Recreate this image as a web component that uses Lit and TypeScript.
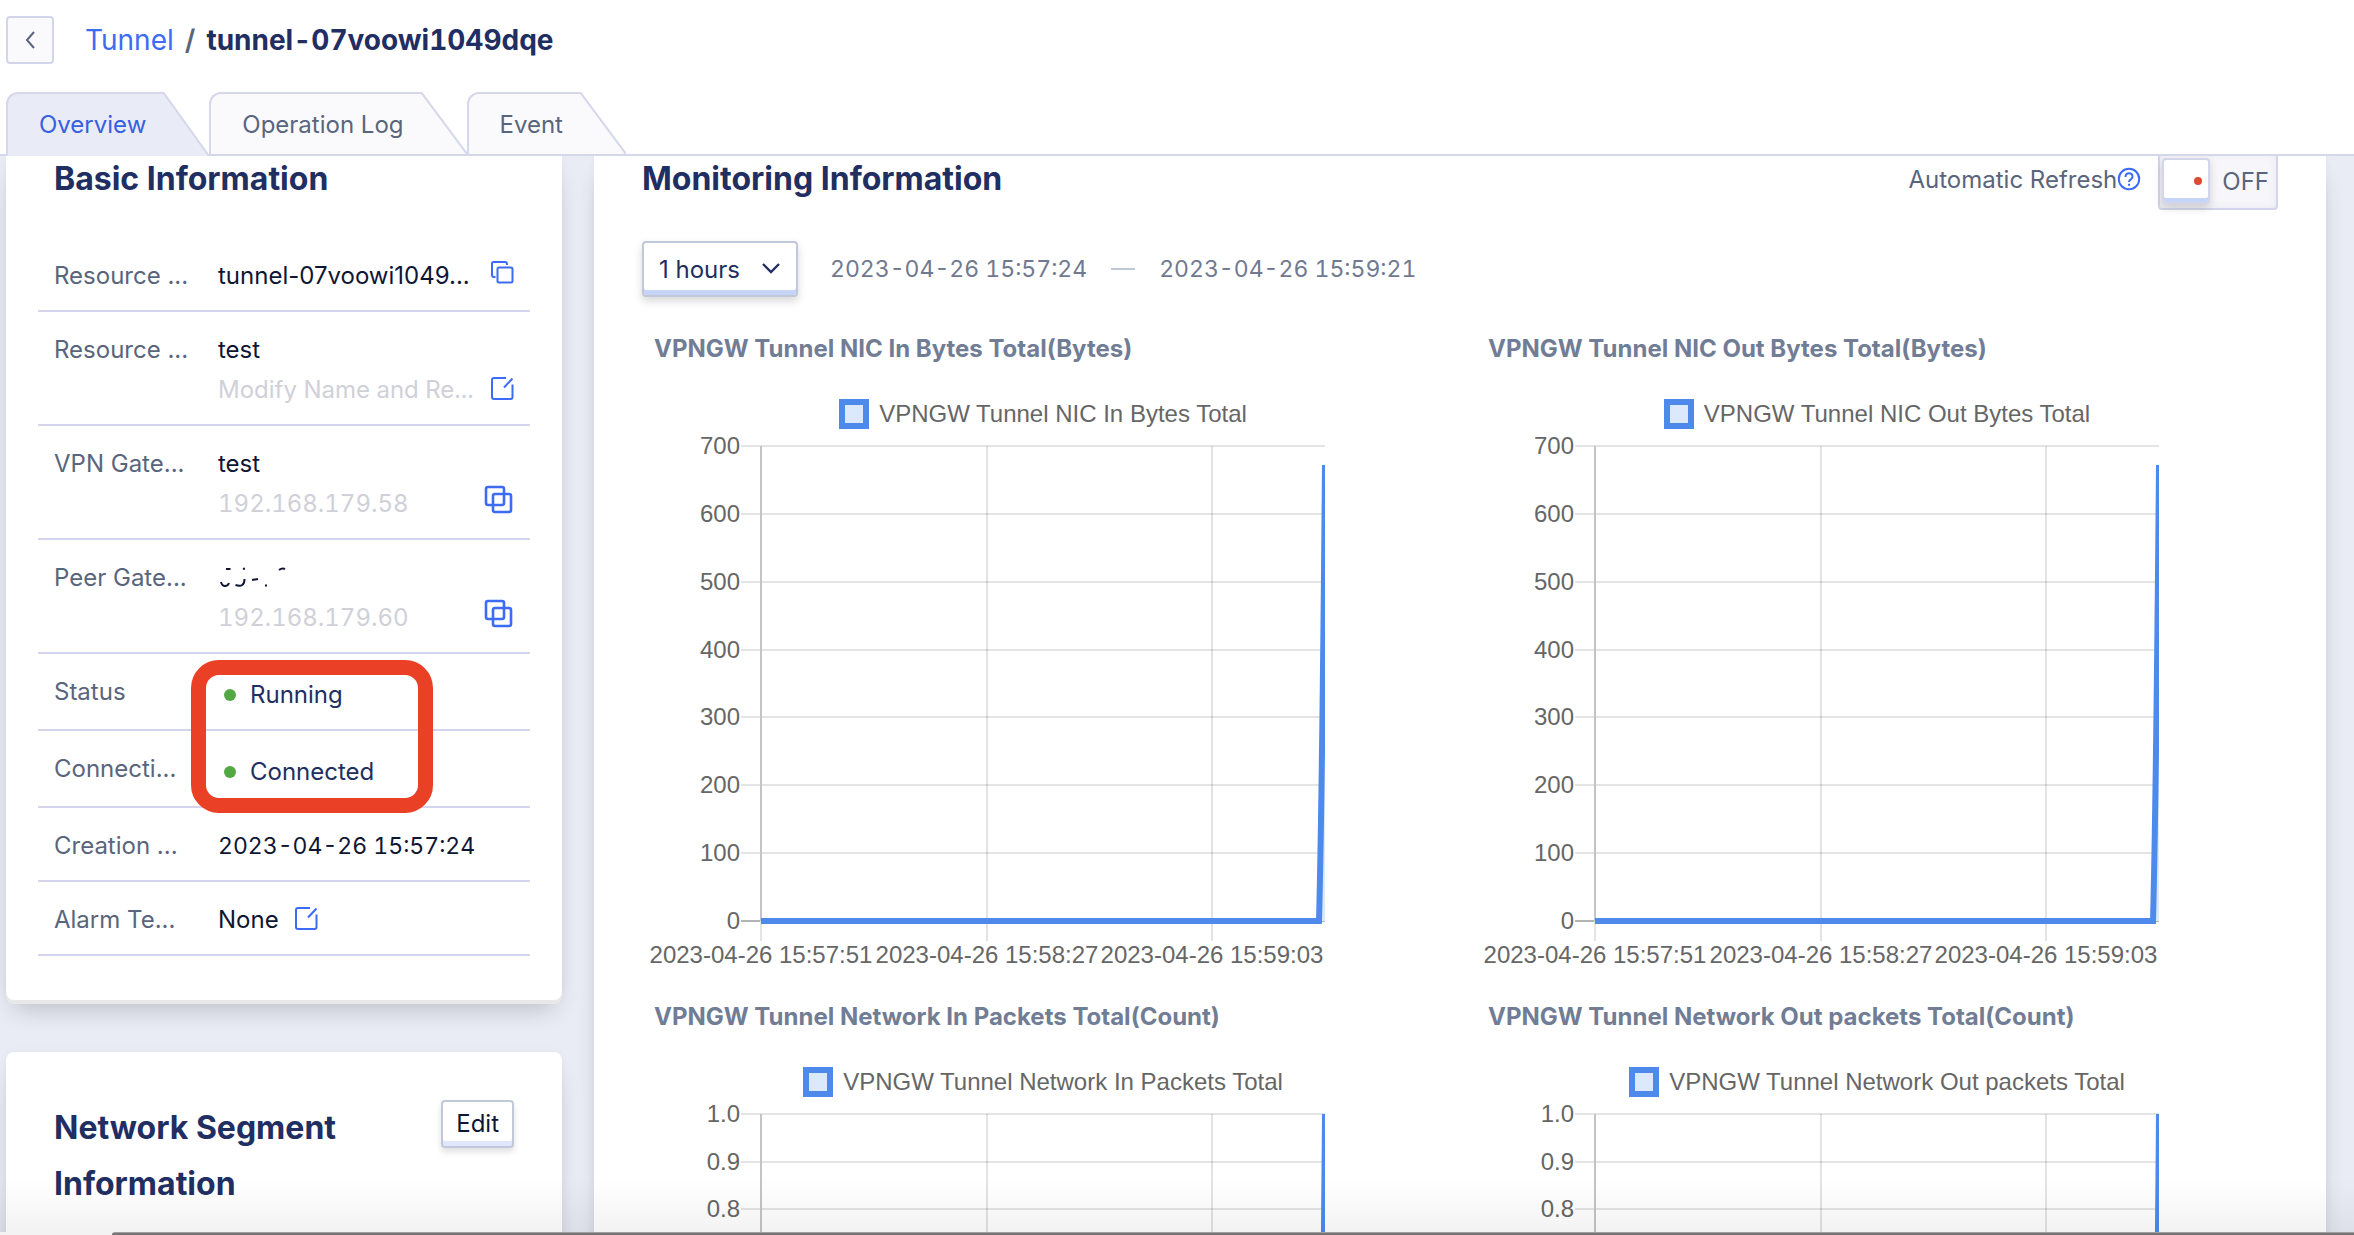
import { LitElement, html, css, svg, nothing } from "lit";
import { customElement, property } from "lit/decorators.js";

const FONT = css`Inter, "Noto Sans", sans-serif`;

const copyIcon = html`<svg class="icon" width="24" height="32" viewBox="0 0 24 32" fill="none" stroke="#3d6bf5" stroke-width="2" aria-hidden="true">
  <path d="M5.500 17H4a2 2 0 0 1-2-2V3.500A1.500 1.500 0 0 1 3.500 2H15a2 2 0 0 1 2 2v1" />
  <rect x="7.500" y="7.500" width="15" height="15" rx="1.500" />
</svg>`;

const editIcon = html`<svg class="icon" width="24" height="28" viewBox="0 0 24 28" fill="none" stroke="#3d6bf5" stroke-width="2" aria-hidden="true">
  <path d="M16 2H4a2 2 0 0 0-2 2v17a2 2 0 0 0 2 2h16.500a2 2 0 0 0 2-2V8.500" />
  <path d="M14 11.500l8.500-9" />
</svg>`;

const duplicateIcon = html`<svg class="icon" width="30" height="38" viewBox="0 0 30 38" fill="none" stroke="#3d6bf5" stroke-width="2.600" aria-hidden="true">
  <rect x="2" y="2" width="18" height="18" rx="2" />
  <rect x="9" y="9" width="18" height="18" rx="2" />
</svg>`;

@customElement("trend-chart")
class TrendChart extends LitElement {
  @property() name = "";
  @property() unit = "";
  @property({ attribute: false }) ticks: string[] = [];
  @property({ attribute: false }) times: string[] = [];
  @property({ attribute: false }) divisions = 7;
  @property({ attribute: false }) peak = 1;

  static styles = css`
    :host { display: block; min-width: 0; font-family: ${FONT}; }
    .title { margin: 0; padding-left: 12px; font-size: 24px; line-height: 32px; font-weight: 700; color: #717d95; white-space: nowrap; }
    .legend { display: flex; justify-content: center; align-items: center; gap: 10px; height: 30px; margin: 34px 0 0; }
    .swatch { box-sizing: border-box; width: 30px; height: 30px; border: 6px solid #4d8aec; background: #dce8fb; }
    .legend, .tick { font-family: "Liberation Sans", Arial, sans-serif; font-size: 24px; color: #666; }
    .plot { display: block; width: 100%; height: auto; }
    .tick { fill: #666; }
    .end { text-anchor: end; }
    .mid { text-anchor: middle; }
  `;

  render() {
    const top = 17, bottom = 492, left = 119, right = 683;
    const step = (bottom - top) / this.divisions;
    const columns = [left, 345, 570];
    const peakY = bottom - (bottom - top) * this.peak;
    return html`
      <h3 class="title">${this.name}(${this.unit})</h3>
      <div class="legend"><span class="swatch"></span><span>${this.name}</span></div>
      <svg class="plot" viewBox="0 0 802 546" role="img" aria-label=${this.name}>
        <defs><clipPath id="area"><rect x="119" y="17" width="564" height="479" /></clipPath></defs>
        ${this.ticks.map((t, i) => {
          const y = Math.round(top + step * i);
          return svg`<line x1="99" x2=${right} y1=${y} y2=${y} stroke=${i === this.divisions ? "#b4b4b4" : "#e4e4e4"} stroke-width="2" />
            <text class="tick end" x="98" y=${y + 8}>${t}</text>`;
        })}
        ${columns.map((x, i) => svg`
          <line x1=${x} x2=${x} y1=${top} y2=${i ? bottom + 20 : bottom} stroke=${i ? "#000" : "#c4c4c4"} stroke-opacity=${i ? 0.11 : 1} stroke-width="2" />
          ${i ? nothing : svg`<line x1=${x} x2=${x} y1=${bottom} y2=${bottom + 20} stroke="#e4e4e4" stroke-width="2" />`}`)}
        ${this.times.map((t, i) => svg`<text class="tick mid" x=${columns[i]} y="534">${t}</text>`)}
        <g clip-path="url(#area)">
          <path d="M678 ${bottom} L683 ${peakY} V${bottom} Z" fill="#dce8fb" />
          <path d="M${left} ${bottom} H677 Q680 380 683 ${peakY}" fill="none" stroke="#4d8aec" stroke-width="6" />
        </g>
      </svg>`;
  }
}

@customElement("app-root")
class AppRoot extends LitElement {
  static styles = css`
    :host { display: flex; flex-direction: column; position: relative; height: 100vh; overflow: hidden; background: #fff; font-family: ${FONT}; font-size: 24px; color: #59657c; }
    button, select { font: inherit; margin: 0; cursor: pointer; }
    h2 { margin: 0; font-size: 32px; line-height: 56px; font-weight: 700; color: #212e62; }
    .icon { display: block; }
    .crumbs { display: flex; align-items: center; padding: 16px 6px 0; height: 48px; }
    .back { display: grid; place-items: center; box-sizing: border-box; width: 48px; height: 48px; padding: 0; border: 2px solid #d3d5ea; border-radius: 4px; background: #fafafd; }
    .trail { display: flex; gap: 11px; margin-left: 31px; font-size: 28px; font-variant-numeric: tabular-nums; }
    .trail a { color: #3d6bf5; text-decoration: none; }
    .trail span { font-weight: 600; }
    .trail strong { font-weight: 700; color: #212e62; }
    .tabs { display: flex; align-items: flex-start; height: 62px; margin-top: 28px; padding-left: 6px; border-bottom: 2px solid #d5d7ea; }
    .tab { display: flex; height: 62px; padding: 0; border: 0; background: none; color: #59657c; }
    .face { display: flex; align-items: center; box-sizing: border-box; height: 100%; padding: 0 17px 0 31px; border: solid #d5d7ea; border-width: 2px 0 0 2px; border-top-left-radius: 12px; background: #fafafd; }
    .slant { display: block; height: 100%; width: 46px; fill: #fafafd; }
    .on { position: relative; height: 64px; color: #3660e0; }
    .on .face { padding-bottom: 2px; background: #e9ecf6; }
    .on .slant { fill: #e9ecf6; }
    .body { flex: 1; min-height: 0; display: grid; grid-template-columns: 556px 1fr; gap: 32px; padding: 0 28px 0 6px; overflow: hidden; background: #e9ebf5; }
    .side { display: flex; flex-direction: column; gap: 52px; }
    .card { background: #fff; box-shadow: 0 4px 0 #e8e8e9, 0 16px 24px -8px rgba(0, 0, 0, 0.2), 0 0 8px rgba(0, 0, 0, 0.04); }
    .info { box-sizing: border-box; padding: 0 32px 44px; border-radius: 0 0 8px 8px; }
    .info h2 { margin: -5px 16px 0; padding-bottom: 31px; }
    .rows { position: relative; margin: 0; }
    .row { display: flex; padding: 18px 16px 14px; border-bottom: 2px solid #d3d5ea; line-height: 40px; white-space: nowrap; }
    .row dt { width: 164px; flex: none; }
    .row dd { flex: 1; margin: 0; color: #0f1633; }
    .line { display: flex; align-items: center; justify-content: space-between; height: 40px; }
    .start { justify-content: flex-start; gap: 15px; }
    .muted { color: #d0d1d8; font-variant-numeric: tabular-nums; }
    .date { font-size: 23px; font-variant-numeric: tabular-nums; }
    .state { display: flex; align-items: center; gap: 14px; padding: 3px 0 0 6px; color: #212e62; }
    .state::before { content: ""; width: 12px; height: 12px; border-radius: 50%; background: #52a943; }
    .act { display: block; padding: 0; border: 0; background: none; }
    .mark { position: absolute; top: 422px; left: 153px; box-sizing: border-box; width: 242px; height: 153px; border: 15px solid #ea4025; border-radius: 28px; pointer-events: none; }
    .segments { flex: 1; display: flex; justify-content: space-between; align-items: flex-start; padding: 48px; border-radius: 8px 8px 0 0; }
    .edit { box-sizing: border-box; height: 48px; padding: 0 13px 2px; border: 2px solid #c1c8da; border-radius: 4px; background: #fff; color: #0f1633; box-shadow: inset 0 -5px #e0e7fc, 0 4px 6px rgba(0, 0, 0, 0.12); }
    .monitor { padding: 0 48px; min-width: 0; }
    .head { display: flex; justify-content: space-between; align-items: center; height: 46px; }
    .refresh { display: flex; align-items: center; }
    .help { margin-right: 17px; }
    .toggle { display: flex; align-items: center; gap: 12px; box-sizing: border-box; height: 58px; padding: 0 7px 0 2px; margin-top: 4px; border: 2px solid #d3d5ea; border-radius: 4px; background: #f6f6fb; box-shadow: inset 0 0 8px rgba(60, 60, 120, 0.08); color: #59657c; }
    .knob { display: flex; align-items: center; justify-content: flex-end; box-sizing: border-box; width: 48px; height: 46px; padding-right: 6px; border: 2px solid #d3d5ea; border-radius: 4px; background: #fff; box-shadow: inset 0 -4px #c5d4f7, 0 4px 8px rgba(0, 0, 0, 0.16); }
    .knob::before { content: ""; width: 8px; height: 8px; border-radius: 50%; background: #e0482f; }
    .range { display: flex; align-items: center; gap: 24px; margin-top: 39px; color: #70798f; white-space: nowrap; }
    .picker { display: grid; align-items: center; margin-right: 8px; }
    .picker > * { grid-area: 1 / 1; }
    .picker select { appearance: none; box-sizing: border-box; width: 156px; height: 56px; padding: 0 15px; border: 2px solid #c1c8da; border-radius: 4px; background: #fff; color: #212e62; box-shadow: inset 0 -5px #c5d4f7, 0 4px 8px rgba(0, 0, 0, 0.16); }
    .picker svg { justify-self: end; margin-right: 17px; pointer-events: none; }
    .dash { width: 24px; height: 2px; background: #c1c8da; }
    .charts { display: grid; grid-template-columns: 1fr 1fr; column-gap: 32px; row-gap: 26px; margin-top: 36px; }
    .fade { position: absolute; left: 0; right: 0; bottom: 0; height: 56px; background: linear-gradient(rgba(0, 0, 0, 0), rgba(0, 0, 0, 0.05)); pointer-events: none; }
    .edge { position: absolute; left: 0; right: 0; bottom: 0; height: 3px; padding-left: 112px; background: #f3f3f3; }
    .edge::before { content: ""; display: block; height: 3px; border-top-left-radius: 3px; background: linear-gradient(#a09f9f 50%, #777575 50%); }
  `;

  private tab(label: string, active = false) {
    return html`<button class="tab ${active ? "on" : ""}" role="tab" aria-selected=${active}>
      <span class="face">${label}</span>
      <svg class="slant" viewBox="0 0 46 62" preserveAspectRatio="none" aria-hidden="true"><path d="M0 0L46 62H0Z" /><path d="M0 0L46 62" stroke="#d5d7ea" stroke-width="2" /></svg>
    </button>`;
  }

  private row(label: string, value: unknown) {
    return html`<div class="row"><dt>${label}</dt><dd>${value}</dd></div>`;
  }

  private act(icon: unknown, label: string) {
    return html`<button class="act" aria-label=${label}>${icon}</button>`;
  }

  render() {
    const bytes = ["700", "600", "500", "400", "300", "200", "100", "0"];
    const counts = ["1.0", "0.9", "0.8"];
    const times = ["2023-04-26 15:57:51", "2023-04-26 15:58:27", "2023-04-26 15:59:03"];
    return html`
      <nav class="crumbs">
        <button class="back" aria-label="Back"><svg width="12" height="20" viewBox="0 0 12 20" fill="none" stroke="#59657c" stroke-width="2"><path d="M10 2L3 10l7 8" /></svg></button>
        <div class="trail"><a href="#tunnels">Tunnel</a><span>/</span><strong>tunnel-07voowi1049dqe</strong></div>
      </nav>
      <div class="tabs" role="tablist">${this.tab("Overview", true)}${this.tab("Operation Log")}${this.tab("Event")}</div>
      <main class="body">
        <div class="side">
          <section class="card info">
            <h2>Basic Information</h2>
            <dl class="rows">
              ${this.row("Resource ...", html`<div class="line"><span>tunnel-07voowi1049...</span>${this.act(copyIcon, "Copy")}</div>`)}
              ${this.row("Resource ...", html`<div class="line">test</div><div class="line muted"><span>Modify Name and Re...</span>${this.act(editIcon, "Edit name")}</div>`)}
              ${this.row("VPN Gate...", html`<div class="line">test</div><div class="line muted"><span>192.168.179.58</span>${this.act(duplicateIcon, "Copy address")}</div>`)}
              ${this.row("Peer Gate...", html`<div class="line"><svg width="70" height="24" viewBox="0 0 70 24" fill="none" stroke="#0f1633" stroke-width="2"><path d="M8 3h4.500M3 16q1 4 4 4t4-3M25 3l2-0.500M17.500 19q9 3 9-6M34 14l6-1M48 18.500v2M61 4q3-2.500 6-1" /></svg></div><div class="line muted"><span>192.168.179.60</span>${this.act(duplicateIcon, "Copy peer address")}</div>`)}
              ${this.row("Status", html`<div class="state">Running</div>`)}
              ${this.row("Connecti...", html`<div class="state">Connected</div>`)}
              ${this.row("Creation ...", html`<div class="date">2023-04-26 15:57:24</div>`)}
              ${this.row("Alarm Te...", html`<div class="line start"><span>None</span>${this.act(editIcon, "Edit alarm template")}</div>`)}
              <div class="mark"></div>
            </dl>
          </section>
          <section class="card segments">
            <h2>Network Segment<br />Information</h2>
            <button class="edit">Edit</button>
          </section>
        </div>
        <section class="card monitor">
          <div class="head">
            <h2>Monitoring Information</h2>
            <div class="refresh">
              <span id="auto">Automatic Refresh</span>
              <svg class="help" width="24" height="24" viewBox="0 0 24 24" fill="none" stroke="#3d6bf5" stroke-width="2" aria-hidden="true"><circle cx="12" cy="12" r="10.200" /><path d="M8.500 10q0-3.700 3.500-3.700t3.500 3.500q0 1.400-1.700 2.500T12 15M12 16.800v2" /></svg>
              <button class="toggle" role="switch" aria-checked="false" aria-labelledby="auto"><span class="knob"></span>OFF</button>
            </div>
          </div>
          <div class="range">
            <label class="picker"><select aria-label="Time range"><option>1 hours</option></select>
              <svg width="20" height="14" viewBox="0 0 20 14" fill="none" stroke="#212e62" stroke-width="2.400" aria-hidden="true"><path d="M2 2l8 8 8-8" /></svg></label>
            <span class="date">2023-04-26 15:57:24</span><span class="dash"></span><span class="date">2023-04-26 15:59:21</span>
          </div>
          <div class="charts">
            <trend-chart name="VPNGW Tunnel NIC In Bytes Total" unit="Bytes" .ticks=${bytes} .times=${times} .peak=${0.96}></trend-chart>
            <trend-chart name="VPNGW Tunnel NIC Out Bytes Total" unit="Bytes" .ticks=${bytes} .times=${times} .peak=${0.96}></trend-chart>
            <trend-chart name="VPNGW Tunnel Network In Packets Total" unit="Count" .ticks=${counts} .divisions=${10}></trend-chart>
            <trend-chart name="VPNGW Tunnel Network Out packets Total" unit="Count" .ticks=${counts} .divisions=${10}></trend-chart>
          </div>
        </section>
      </main>
      <div class="fade"></div>
      <div class="edge"></div>
    `;
  }
}
